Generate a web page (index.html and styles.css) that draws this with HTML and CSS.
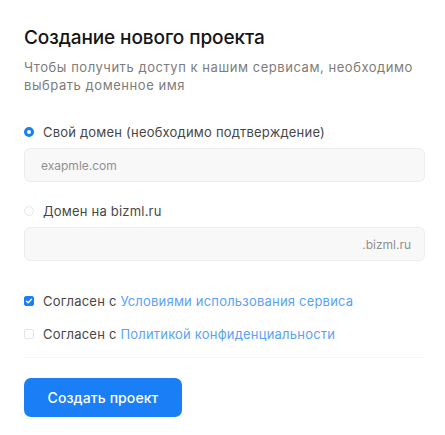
FILE: index.html
```html
<!DOCTYPE html>
<html lang="ru">
<head>
    <meta charset="UTF-8">
    <meta name="viewport" content="width=device-width, initial-scale=1.0">
    <title>Создание нового проекта</title>
    <link rel="stylesheet" href="styles.css">
</head>
<body>
    <div class="project-form">
        <h1>Создание нового проекта</h1>
        <p class="lead">Чтобы получить доступ к нашим сервисам, необходимо выбрать доменное имя</p>

        <label class="option">
            <span class="radio checked"></span>
            <span>Свой домен (необходимо подтверждение)</span>
        </label>
        <div class="field">
            <span class="placeholder">exapmle.com</span>
        </div>

        <label class="option">
            <span class="radio"></span>
            <span>Домен на bizml.ru</span>
        </label>
        <div class="field suffix">
            <span class="placeholder">.bizml.ru</span>
        </div>

        <div class="agreements">
            <label class="option">
                <span class="check checked">
                    <svg width="8" height="8" viewBox="0 0 8 8"><path d="M1.5 4.2 3.2 5.8 6.5 2.3" fill="none" stroke="#fff" stroke-width="1.4" stroke-linecap="round" stroke-linejoin="round"/></svg>
                </span>
                <span>Согласен с <a href="#">Условиями использования сервиса</a></span>
            </label>
            <label class="option">
                <span class="check"></span>
                <span>Согласен с <a href="#">Политикой конфиденциальности</a></span>
            </label>
        </div>

        <div class="actions">
            <button type="button">Создать проект</button>
        </div>
    </div>
</body>
</html>
```

FILE: styles.css
```css
/* Общие настройки */
body {
    margin: 0;
    padding: 26px 20px 0 24px;
    background: #fff;
    font-family: Inter, "Noto Sans", sans-serif;
    color: #444;
}

.project-form {
    display: flex;
    flex-direction: column;
}

h1 {
    margin: 0;
    font-size: 19px;
    line-height: 24px;
    font-weight: 500;
    color: #151515;
    letter-spacing: -0.1px;
}

.lead {
    margin: 8px 0 28px;
    font-size: 13px;
    line-height: 18px;
    letter-spacing: 0.55px;
    color: #7c7c7c;
    max-width: 392px;
}

/* Радио и чекбоксы */
.option {
    display: flex;
    align-items: center;
    gap: 9px;
    height: 20px;
    font-size: 13px;
    letter-spacing: 0.2px;
    color: #474747;
}

.radio {
    width: 10px;
    height: 10px;
    border-radius: 50%;
    border: 1px solid #e6e6e8;
    box-sizing: border-box;
}

.radio.checked {
    border: 3px solid #1a7ef7;
}

.check {
    width: 10px;
    height: 10px;
    border-radius: 2px;
    border: 1px solid #e3e3e6;
    box-sizing: border-box;
    display: flex;
    align-items: center;
    justify-content: center;
}

.check.checked {
    background: #1a7ef7;
    border-color: #1a7ef7;
}

.option a {
    color: #5aa2f7;
    text-decoration: none;
}

/* Поля ввода */
.field {
    display: flex;
    align-items: center;
    height: 34px;
    margin: 6px 0 19px;
    padding: 0 16px;
    background: #f8f8f9;
    border: 1px solid #ededef;
    border-radius: 6px;
    box-sizing: border-box;
    font-size: 12px;
    color: #909090;
}

.field.suffix {
    justify-content: flex-end;
    padding-right: 13px;
    margin-bottom: 30px;
}

.agreements {
    display: flex;
    flex-direction: column;
    gap: 13px;
    padding-bottom: 13px;
    border-bottom: 1px solid #f6f6f6;
}

.actions {
    padding-top: 20px;
}

button {
    width: 158px;
    height: 39px;
    background: #1a7ef7;
    color: #fff;
    border: none;
    border-radius: 7px;
    font-family: Inter, "Noto Sans", sans-serif;
    font-size: 14px;
    font-weight: 500;
    letter-spacing: 0.1px;
    cursor: pointer;
}
```
